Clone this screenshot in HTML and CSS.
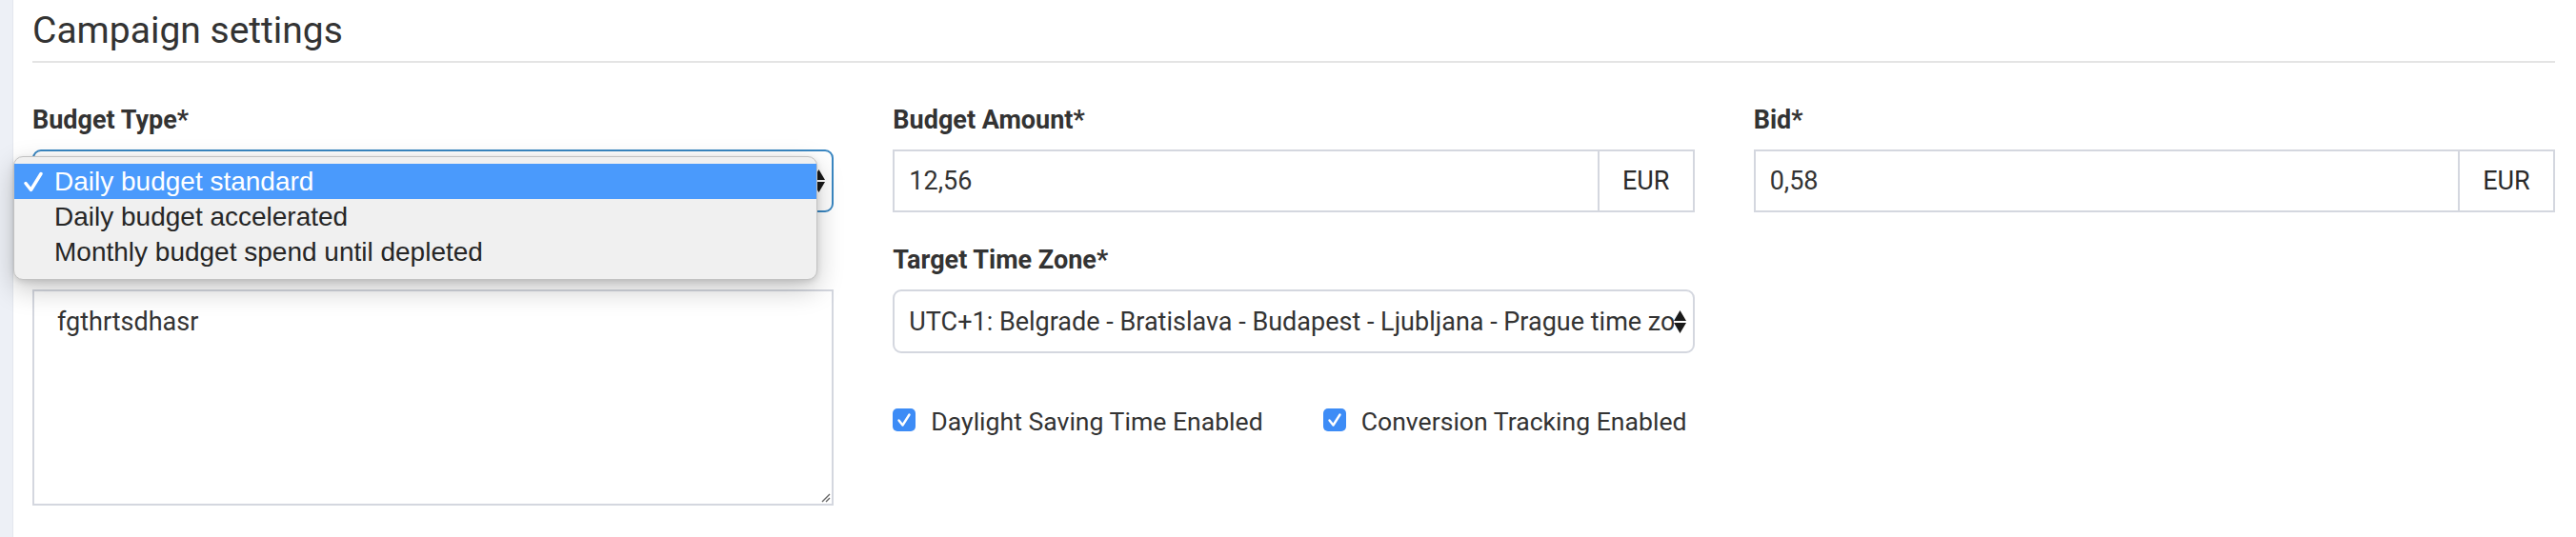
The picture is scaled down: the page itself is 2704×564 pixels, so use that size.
FILE: index.html
```html
<!DOCTYPE html>
<html lang="en">
<head>
<meta charset="utf-8">
<title>Campaign settings</title>
<link rel="stylesheet" href="styles.css">
</head>
<body>
<div class="page">
  <aside class="strip"></aside>
  <main class="content">
    <h1 class="title">Campaign settings</h1>
    <div class="grid">
      <div class="col">
        <div class="field field-select">
          <label class="label">Budget Type*</label>
          <div class="control select focus">
            <span class="value"></span>
            <svg class="arrows" width="13" height="24" viewBox="0 0 13 24"><path d="M6.5 0 L13 11 L0 11 Z M6.5 24 L13 13 L0 13 Z" fill="#1a1a1a"/></svg>
          </div>
          <div class="popup">
            <div class="option selected">
              <svg class="tick" width="20" height="22" viewBox="0 0 20 22"><path d="M2 12.5 L7.5 19.5 L18 2.5" fill="none" stroke="#fff" stroke-width="3.4" stroke-linecap="round" stroke-linejoin="round"/></svg>
              Daily budget standard
            </div>
            <div class="option">Daily budget accelerated</div>
            <div class="option">Monthly budget spend until depleted</div>
          </div>
        </div>
        <div class="field">
          <label class="label"></label>
          <div class="textarea">fgthrtsdhasr
            <svg class="grip" width="12" height="12" viewBox="0 0 12 12"><path d="M11 3 L3 11 M11 7 L7 11" stroke="#666" stroke-width="1.4" fill="none"/></svg>
          </div>
        </div>
      </div>
      <div class="col">
        <div class="field">
          <label class="label">Budget Amount*</label>
          <div class="control input-group">
            <span class="value">12,56</span>
            <span class="addon">EUR</span>
          </div>
        </div>
        <div class="field">
          <label class="label">Target Time Zone*</label>
          <div class="control select tz">
            <span class="value">UTC+1: Belgrade - Bratislava - Budapest - Ljubljana - Prague time zone</span>
            <svg class="arrows" width="13" height="24" viewBox="0 0 13 24"><path d="M6.5 0 L13 11 L0 11 Z M6.5 24 L13 13 L0 13 Z" fill="#1a1a1a"/></svg>
          </div>
        </div>
        <div class="checks">
          <label class="check">
            <span class="box"><svg width="24" height="24" viewBox="0 0 24 24"><path d="M6.5 12.5 L10.5 17.5 L17.5 6.5" fill="none" stroke="#fff" stroke-width="2.4" stroke-linecap="round" stroke-linejoin="round"/></svg></span>
            <span class="check-text">Daylight Saving Time Enabled</span>
          </label>
          <label class="check">
            <span class="box"><svg width="24" height="24" viewBox="0 0 24 24"><path d="M6.5 12.5 L10.5 17.5 L17.5 6.5" fill="none" stroke="#fff" stroke-width="2.4" stroke-linecap="round" stroke-linejoin="round"/></svg></span>
            <span class="check-text">Conversion Tracking Enabled</span>
          </label>
        </div>
      </div>
      <div class="col">
        <div class="field">
          <label class="label">Bid*</label>
          <div class="control input-group">
            <span class="value">0,58</span>
            <span class="addon">EUR</span>
          </div>
        </div>
      </div>
    </div>
  </main>
</div>
</body>
</html>
```

FILE: styles.css
```css
html, body {
  margin: 0;
  padding: 0;
  background: #ffffff;
}
body {
  font-family: Roboto, "Liberation Sans", sans-serif;
  color: #333333;
}
.page {
  display: flex;
  min-height: 564px;
}
.strip {
  flex: none;
  width: 13px;
  background: #edf0f6;
  border-right: 1px solid #e3e7ee;
}
.content {
  flex: 1;
  min-width: 0;
  padding: 0 22px 0 20px;
}
.title {
  margin: 0;
  padding: 8px 0 8px;
  font-size: 39px;
  line-height: 48px;
  font-weight: 400;
  color: #333333;
  border-bottom: 2px solid #e4e4e4;
}
.grid {
  display: grid;
  grid-template-columns: repeat(3, minmax(0, 1fr));
  column-gap: 62px;
  margin-top: 42px;
}
.col {
  min-width: 0;
}
.field {
  display: flex;
  flex-direction: column;
}
.field + .field {
  margin-top: 32px;
}
.field-select {
  position: relative;
}
.label {
  display: block;
  height: 36px;
  margin-bottom: 13px;
  font-size: 27px;
  line-height: 36px;
  font-weight: 700;
  color: #333333;
}
.control {
  box-sizing: border-box;
  height: 66px;
  display: flex;
  align-items: center;
  border: 2px solid #d4d7df;
  background: #ffffff;
  font-size: 27px;
  color: #333333;
}
.control .value {
  flex: 1;
  min-width: 0;
  padding-left: 15px;
  white-space: nowrap;
  overflow: hidden;
}
.input-group .addon {
  flex: none;
  box-sizing: border-box;
  width: 100px;
  height: 100%;
  display: flex;
  align-items: center;
  justify-content: center;
  border-left: 2px solid #d4d7df;
  color: #2a2a2a;
}
.select {
  border-radius: 9px;
  padding-right: 7px;
}
.select .value {
  padding-right: 9px;
}
.select.focus {
  border-color: #3a87c2;
}
.select.tz {
  height: 67px;
}
.arrows {
  flex: none;
}
.popup {
  position: absolute;
  z-index: 10;
  left: -20px;
  top: 56px;
  width: 844px;
  box-sizing: border-box;
  padding: 7px 0 10px;
  background: #f0f0f0;
  border: 1px solid #c2c2c2;
  border-radius: 10px;
  box-shadow: 0 10px 28px rgba(0, 0, 0, 0.22), 0 2px 6px rgba(0, 0, 0, 0.12);
  font-family: "Liberation Sans", Arial, sans-serif;
  font-size: 28px;
  color: #262626;
}
.option {
  position: relative;
  height: 37px;
  line-height: 37px;
  padding-left: 42px;
  white-space: nowrap;
}
.option.selected {
  background: #4a9afc;
  color: #ffffff;
}
.tick {
  position: absolute;
  left: 10px;
  top: 8px;
}
.textarea {
  position: relative;
  box-sizing: border-box;
  height: 227px;
  padding: 14px 24px;
  border: 2px solid #d4d7df;
  font-size: 27px;
  line-height: 36px;
  color: #333333;
}
.grip {
  position: absolute;
  right: 1px;
  bottom: 1px;
}
.checks {
  display: flex;
  align-items: flex-start;
  gap: 63px;
  margin-top: 54px;
}
.check {
  flex: none;
  display: flex;
  align-items: flex-start;
  gap: 16px;
  font-size: 26.6px;
  line-height: 36px;
  color: #333333;
  white-space: nowrap;
}
.box {
  flex: none;
  width: 24px;
  height: 24px;
  margin-top: 4px;
  border-radius: 5px;
  background: #3d8cf6;
  display: flex;
}
```
